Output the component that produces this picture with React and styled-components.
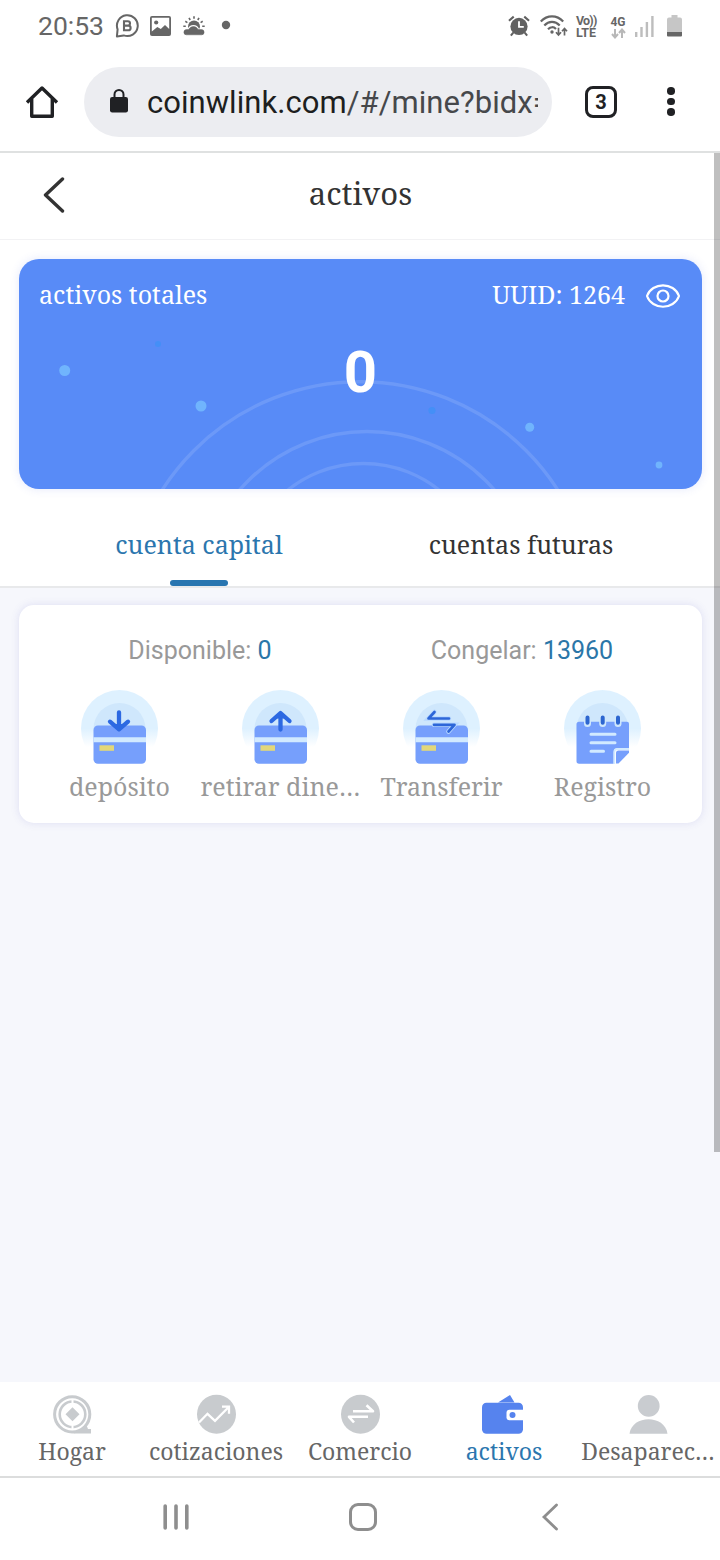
import React from "react";
import styled, { createGlobalStyle } from "styled-components";

const serif = '"Noto Serif", "Droid Serif", "DejaVu Serif Condensed", "DejaVu Serif", serif';
const sans = 'Roboto, "Liberation Sans", sans-serif';

const GlobalStyle = createGlobalStyle`
  * { box-sizing: border-box; }
  body { margin: 0; background: #fff; font-family: ${serif}; }
  svg { display: block; flex: none; }
`;

const Screen = styled.div`
  width: 720px;
  height: 1560px;
  display: flex;
  flex-direction: column;
  background: #fff;
  overflow: hidden;
`;

const StatusBar = styled.div`
  height: 52px;
  padding: 0 38px;
  display: flex;
  justify-content: space-between;
  align-items: center;
  font-family: ${sans};
  color: #666;
`;
const StatusGroup = styled.div`
  display: flex;
  align-items: center;
`;
const Clock = styled.span`
  font-size: 26.5px;
  line-height: 52px;
  width: 77px;
`;
const Gap = styled.span`
  flex: none;
  width: ${(p) => p.$w}px;
`;
const VoLte = styled.div`
  width: 21px;
  padding-top: 1px;
  font: 700 12.5px/12px ${sans};
  white-space: nowrap;
  div:first-child { letter-spacing: -0.8px; }
`;
const Network = styled.div`
  display: flex;
  flex-direction: column;
  align-items: center;
  margin-left: 13px;
  padding-top: 2px;
  width: 16px;
  font: 700 12px/12px ${sans};
`;

const BrowserBar = styled.div`
  height: 101px;
  border-bottom: 2px solid #dfe1e1;
  padding: 0 36px 0 25px;
  display: flex;
  align-items: center;
`;
const Address = styled.div`
  width: 468px;
  height: 70px;
  margin-left: 25px;
  border-radius: 35px;
  background: #ecedf1;
  display: flex;
  align-items: center;
  padding: 1px 14px 0 25px;
`;
const Url = styled.div`
  margin-left: 18px;
  padding-top: 2px;
  width: 391px;
  overflow: hidden;
  white-space: nowrap;
  font: 400 31px/44px ${sans};
  letter-spacing: 0.05px;
  color: #46484b;
  b { font-weight: 400; color: #1d1e20; }
`;
const TabCount = styled.div`
  width: 32px;
  height: 32px;
  margin-left: 33px;
  border: 3px solid #202124;
  border-radius: 8px;
  font: 700 20px/26px ${sans};
  text-align: center;
  color: #202124;
`;
const Kebab = styled.div`
  margin-left: auto;
  width: 26px;
  display: flex;
  flex-direction: column;
  align-items: center;
  gap: 3px;
  i { width: 7.5px; height: 7.5px; border-radius: 50%; background: #202124; }
`;

const Page = styled.main`
  position: relative;
  height: 1229px;
  background: #f6f7fc;
`;
const ScrollThumb = styled.div`
  position: absolute;
  top: 0;
  right: 0;
  width: 6px;
  height: 999px;
  background: rgba(0, 0, 0, 0.25);
`;
const TitleBar = styled.header`
  height: 87px;
  background: #fff;
  border-bottom: 1px solid #f2f2f4;
  display: grid;
  grid-template-columns: 100px 1fr 100px;
  align-items: center;
  padding-bottom: 3px;
`;
const Back = styled.div`
  padding-left: 42px;
`;
const Title = styled.h1`
  margin: 0;
  padding: 0 0 3px 1px;
  text-align: center;
  font: 400 31px/44px ${serif};
  color: #333;
`;

const Overview = styled.section`
  height: 348px;
  background: #fff;
  padding: 19px 18px 0 19px;
  border-bottom: 2px solid #e8e9eb;
`;
const BalanceCard = styled.div`
  position: relative;
  height: 230px;
  border-radius: 20px;
  background: #588bf7;
  box-shadow: 0 0 10px rgba(88, 110, 230, 0.16);
  overflow: hidden;
  color: #fff;
`;
const CardArt = styled.svg`
  position: absolute;
  inset: 0;
`;
const CardTop = styled.div`
  position: relative;
  display: flex;
  align-items: center;
  padding: 17px 21px 0 20px;
  font: 400 25px/36px ${serif};
  svg { margin-left: 20px; margin-top: 4px; }
`;
const Uuid = styled.span`
  margin-left: auto;
`;
const Total = styled.div`
  position: relative;
  text-align: center;
  font: 700 58px/68px ${sans};
  margin-top: 26px;
`;

const Tabs = styled.div`
  display: flex;
  height: 97px;
  padding: 0 20px 0 19px;
`;
const Tab = styled.div`
  flex: 1;
  display: flex;
  flex-direction: column;
  align-items: center;
  justify-content: flex-end;
  color: ${(p) => (p.$active ? "#2b76ae" : "#333")};
  font: 400 25px/36px ${serif};
  &::after {
    content: "";
    width: 58px;
    height: 6px;
    margin-top: 18px;
    border-radius: 3px;
    background: ${(p) => (p.$active ? "#2875b0" : "transparent")};
  }
`;

const Panel = styled.section`
  margin: 17px 18px 0 19px;
  height: 218px;
  padding: 28px 19px 0 20px;
  border-radius: 15px;
  background: #fff;
  box-shadow: 0 0 8px rgba(80, 80, 190, 0.15);
`;
const Stats = styled.div`
  display: flex;
`;
const Stat = styled.div`
  flex: 1;
  text-align: center;
  font: 400 25px/36px ${sans};
  color: #999;
  b { font-weight: 400; color: #2b76a8; }
`;
const Actions = styled.div`
  display: flex;
  margin-top: 21px;
`;
const Action = styled.div`
  width: 161px;
  display: flex;
  flex-direction: column;
  align-items: center;
`;
const ActionLabel = styled.div`
  margin-top: 3px;
  font: 400 25px/36px ${serif};
  color: #999;
  white-space: nowrap;
`;

const BottomNav = styled.nav`
  height: 96px;
  border-bottom: 2px solid #dcdddd;
  display: flex;
  background: #fff;
`;
const NavItem = styled.div`
  width: 144px;
  padding-top: 12px;
  display: flex;
  flex-direction: column;
  align-items: center;
  color: ${(p) => (p.$active ? "#2b76ae" : "#666")};
  svg { margin-right: ${(p) => (p.$active ? 4 : 0)}px; }
`;
const NavLabel = styled.div`
  font: 400 23px/32px ${serif};
  white-space: nowrap;
  height: 31px;
  overflow: hidden;
  margin-top: 1px;
`;
const SystemNav = styled.div`
  height: 82px;
  display: grid;
  grid-template-columns: 351px 23px 351px;
  align-items: center;
  padding-bottom: 4px;
  justify-items: center;
`;

const ChatIcon = () => (
  <svg width="24" height="24" viewBox="0 0 24 24" fill="none" stroke="#666" strokeWidth="2">
    <path d="M2.600 15.300A10.400 10.400 0 1 1 8.700 21.400L1.900 22.400Z" strokeLinejoin="round" />
    <path d="M9 7.200h3.800a2.200 2.200 0 0 1 0 4.400H9zM9 11.600h4.300a2.300 2.300 0 0 1 0 4.600H9z" strokeWidth="2.100" />
  </svg>
);
const PhotoIcon = () => (
  <svg width="21" height="20" viewBox="0 0 21 20">
    <rect width="21" height="20" rx="2" fill="#666" />
    <path d="M1.800 1.800h17.400v11.200l-4.200-4-4.200 4-3.500-2L1.800 15.500z" fill="#fff" />
    <circle cx="6.200" cy="6.500" r="2.100" fill="#666" />
  </svg>
);
const WeatherIcon = () => (
  <svg width="22" height="20" viewBox="0 0 22 20" fill="#666">
    <circle cx="11" cy="10.500" r="6" />
    <path d="M11 .3v2.500M6 1.800l1.200 2.200M16 1.800l-1.200 2.200M2.300 5.300l2.100 1.300M19.700 5.300l-2.100 1.300M.3 10.300h2.500M19.200 10.300h2.500" stroke="#666" strokeWidth="1.600" />
    <path d="M3.500 18.800a2.600 2.600 0 0 1 0-5.200h2.200C7.500 9 13.500 9 15 13.600h3.500a2.600 2.600 0 0 1 0 5.200z" stroke="#fff" strokeWidth="2.200" />
    <path d="M3.500 18.800a2.600 2.600 0 0 1 0-5.200h2.200C7.500 9.500 13.500 9.500 15 13.600h3.500a2.600 2.600 0 0 1 0 5.200z" stroke="#666" strokeWidth=".5" />
  </svg>
);
const AlarmIcon = () => (
  <svg width="22" height="22" viewBox="0 0 23 22" fill="none" stroke="#616161" strokeWidth="2.200">
    <circle cx="11.500" cy="11.500" r="9" fill="#616161" stroke="none" />
    <path d="M1 5.500L6 1.200M22 5.500L17 1.200M5.500 18l-2.500 3M17.500 18l2.500 3" />
    <path d="M11.500 6v6h5" stroke="#fff" strokeWidth="1.900" />
  </svg>
);
const WifiIcon = () => (
  <svg width="28" height="22" viewBox="0 0 28 22" fill="none" stroke="#666" strokeWidth="2.200">
    <path d="M.8 6.500C7.300-.3 16.700-.3 23.200 6.500M4.300 10.500c4.500-4.800 10.900-4.800 15.400 0M8 14.200c2.600-2.600 5.700-2.600 8-.2" />
    <circle cx="12" cy="17" r="1.700" fill="#666" stroke="none" />
    <path d="M18.500 12.800v7.200M16 17.200l2.500 2.800 2.500-2.800M24.500 20.500V13.500M22 16.300l2.500-2.800 2.500 2.800" strokeWidth="1.700" />
  </svg>
);
const DataArrows = () => (
  <svg width="15" height="11" viewBox="0 0 15 11" fill="none" stroke="#b8b8b8" strokeWidth="2">
    <path d="M4 1v8M1 6l3 3.500L7 6M11 10V2M8 5l3-3.500L14 5" />
  </svg>
);
const SignalIcon = () => (
  <svg width="19" height="21" viewBox="0 0 19 21" fill="#bdbdbd">
    <path d="M0 16h2.400v5H0zM5.300 11h2.400v10H5.300zM10.700 6h2.400v15h-2.400zM16.200 0h2.400v21h-2.400z" />
  </svg>
);
const BatteryIcon = () => (
  <svg width="15" height="22" viewBox="0 0 15 22">
    <path d="M4.500 0h6v2.500H13q2 0 2 2V17H0V4.500q0-2 2-2h2.500z" fill="#c6c6c6" />
    <path d="M0 17h15v3.500q0 1-1 1H1q-1 0-1-1z" fill="#666" />
  </svg>
);
const HomeIcon = () => (
  <svg width="34" height="34" viewBox="0 0 34 34" fill="none" stroke="#202124" strokeWidth="3.400">
    <path d="M2 17.500L17 3l15 14.500M6.700 14v17.200h20.600V14" strokeLinejoin="round" />
  </svg>
);
const LockIcon = () => (
  <svg width="20" height="26" viewBox="0 0 20 26">
    <rect x="1" y="8" width="18" height="15.500" rx="2.200" fill="#202124" />
    <path d="M5.500 9V5.500a4.500 4.500 0 0 1 9 0V9" fill="none" stroke="#202124" strokeWidth="2" />
  </svg>
);
const EyeIcon = () => (
  <svg width="36" height="26" viewBox="0 0 36 26" fill="none" stroke="#fff" strokeWidth="2.200">
    <path d="M2 13C7-1.300 29-1.300 34 13 29 27.300 7 27.300 2 13z" strokeLinejoin="round" />
    <circle cx="18" cy="13" r="5.500" />
  </svg>
);

const Halo = ({ id, children }) => (
  <svg width="77" height="75" viewBox="0 0 77 75">
    <defs>
      <linearGradient id={id} x1="0" y1="0" x2="0" y2="1">
        <stop offset="0.500" stopColor="#def1ff" />
        <stop offset="0.740" stopColor="#fff" />
      </linearGradient>
    </defs>
    <circle cx="38.500" cy="38.500" r="38.500" fill={`url(#${id})`} />
    <circle cx="38.500" cy="39" r="26" fill="#cfe7fc" />
    {children}
  </svg>
);
const BankCard = () => (
  <>
    <rect x="12.500" y="35.500" width="52.500" height="38.200" rx="4.500" fill="#769ffc" />
    <path d="M12.500 47.300H65v5H12.500z" fill="#d2eaff" />
    <path d="M18.500 55.300h14.500v5.500H18.500z" fill="#e2d77a" />
  </>
);
const DepositIcon = () => (
  <Halo id="halo-deposit">
    <BankCard />
    <path d="M38 22.300v15.500M29 31.700l9 7.600 9-7.600" fill="none" stroke="#2d69e2" strokeWidth="4.300" strokeLinecap="round" strokeLinejoin="round" />
    <path d="M34 34h8l-4 5z" fill="#2d69e2" />
  </Halo>
);
const WithdrawIcon = () => (
  <Halo id="halo-withdraw">
    <BankCard />
    <path d="M38.500 39.500V24M29.500 31l9-8 9 8" fill="none" stroke="#2d69e2" strokeWidth="4.300" strokeLinecap="round" strokeLinejoin="round" />
    <path d="M34.500 28.500h8l-4-5z" fill="#2d69e2" />
  </Halo>
);
const TransferIcon = () => (
  <Halo id="halo-transfer">
    <BankCard />
    <path d="M46 28.500H25.500l6-6.500M31 34.800h20.500l-6 6.700" fill="none" stroke="#b9d9ff" strokeWidth="4.500" strokeLinecap="round" />
    <path d="M46 28.500H25.500l6-6.500M31 34.800h20.500l-6 6.700" fill="none" stroke="#2d66d8" strokeWidth="2.700" strokeLinecap="round" strokeLinejoin="round" />
  </Halo>
);
const RecordIcon = () => (
  <Halo id="halo-record">
    <path d="M15 31.700h48q2 0 2 2V58.500L50 73.700H15q-2.500 0-2.500-2.500v-37q0-2.500 2.500-2.500z" fill="#769ffc" />
    <path d="M49.800 75V62q0-3.500 3.500-3.500H66V75z" fill="#fff" />
    <path d="M50.300 74V62q0-3 3-3H65" fill="none" stroke="#d2eaff" strokeWidth="1.800" />
    <path d="M52 73.500V63q0-2.500 2.500-2.500H65v2.300L54.500 73.500z" fill="#769ffc" />
    <path d="M23.500 27v6.500M38.700 27v6.500M54 27v6.500" stroke="#cfe7fc" strokeWidth="7" strokeLinecap="round" />
    <path d="M23.500 27.500v5.200M38.700 27.500v5.200M54 27.500v5.200" stroke="#2d66d0" strokeWidth="4" strokeLinecap="round" />
    <path d="M27 44.300h24M27 52.800h24M27 61.200h12.500" stroke="#d2eaff" strokeWidth="3" strokeLinecap="round" />
  </Halo>
);

const ChipIcon = () => (
  <svg width="39" height="40" viewBox="0 0 39 40" fill="none">
    <circle cx="19.200" cy="20.300" r="17.600" stroke="#c8cbce" strokeWidth="3" />
    <path d="M26 36.500L33 30l2 5h3v4.500H20z" fill="#c8cbce" />
    <circle cx="19.500" cy="20.300" r="12.800" stroke="#c8cbce" strokeWidth="2.600" />
    <path d="M19.500 5v4.500M19.500 31V35" stroke="#fff" strokeWidth="2" />
    <path d="M19.500 13.300l7 7-7 7-7-7z" fill="#c8cbce" />
  </svg>
);
const QuotesIcon = () => (
  <svg width="39" height="40" viewBox="0 0 39 40" fill="none" stroke="#fff" strokeWidth="2.300">
    <circle cx="19.500" cy="20.300" r="19.500" fill="#c8cbce" stroke="none" />
    <path d="M2 28.500l8.500-8.700 7.500 7L31.500 13.200M25 12.700h7v7" />
  </svg>
);
const TradeIcon = () => (
  <svg width="39" height="40" viewBox="0 0 39 40" fill="none" stroke="#fff" strokeWidth="2.600">
    <circle cx="19.500" cy="20.300" r="19.500" fill="#c8cbce" stroke="none" />
    <path d="M12 17.300h20l-6.500-6M27 22.800H8l5 5.700" strokeLinejoin="round" />
  </svg>
);
const WalletIcon = () => (
  <svg width="41" height="40" viewBox="0 0 41 40">
    <path d="M16 8.500L28 1l4.500 7.500z" fill="#5683ee" />
    <rect y="8.800" width="41" height="31" rx="4.500" fill="#5683ee" />
    <path d="M41 15.800H27.500q-3 0-3 3v4.500q0 3 3 3H41z" fill="#fff" />
    <circle cx="30.500" cy="21" r="3" fill="#5683ee" />
  </svg>
);
const PersonIcon = () => (
  <svg width="39" height="40" viewBox="0 0 39 40" fill="#c9ccd0">
    <circle cx="19.700" cy="11.900" r="10.900" />
    <path d="M.5 39.800C3 20.500 36 20.500 38.500 39.800z" />
  </svg>
);

const actions = [
  { label: "depósito", Icon: DepositIcon },
  { label: "retirar dine…", Icon: WithdrawIcon },
  { label: "Transferir", Icon: TransferIcon },
  { label: "Registro", Icon: RecordIcon },
];
const navItems = [
  { label: "Hogar", Icon: ChipIcon },
  { label: "cotizaciones", Icon: QuotesIcon },
  { label: "Comercio", Icon: TradeIcon },
  { label: "activos", Icon: WalletIcon, active: true },
  { label: "Desaparec…", Icon: PersonIcon },
];

export default function App() {
  return (
    <Screen>
      <GlobalStyle />
      <StatusBar>
        <StatusGroup>
          <Clock>20:53</Clock>
          <ChatIcon />
          <Gap $w={11} />
          <PhotoIcon />
          <Gap $w={12} />
          <WeatherIcon />
          <Gap $w={16} />
          <svg width="10" height="12">
            <circle cx="5" cy="5" r="4.200" fill="#666" />
          </svg>
        </StatusGroup>
        <StatusGroup>
          <AlarmIcon />
          <Gap $w={10} />
          <WifiIcon />
          <Gap $w={8} />
          <VoLte>
            <div>Vo))</div>
            <div>LTE</div>
          </VoLte>
          <Network>
            <span>4G</span>
            <DataArrows />
          </Network>
          <Gap $w={9} />
          <SignalIcon />
          <Gap $w={13} />
          <BatteryIcon />
        </StatusGroup>
      </StatusBar>
      <BrowserBar>
        <HomeIcon />
        <Address>
          <LockIcon />
          <Url>
            <b>coinwlink.com</b>/#/mine?bidx=
          </Url>
        </Address>
        <TabCount>3</TabCount>
        <Kebab>
          <i />
          <i />
          <i />
        </Kebab>
      </BrowserBar>
      <Page>
        <TitleBar>
          <Back>
            <svg width="24" height="36" viewBox="0 0 24 36" fill="none" stroke="#333" strokeWidth="3.400">
              <path d="M20.500 2L3.500 18l17 16" strokeLinecap="round" strokeLinejoin="round" />
            </svg>
          </Back>
          <Title>activos</Title>
        </TitleBar>
        <Overview>
          <BalanceCard>
            <CardArt width="683" height="230" viewBox="19 259 683 230" fill="none">
              <g stroke="#fff" strokeOpacity="0.120" strokeWidth="3.400">
                <circle cx="360" cy="616.500" r="234.800" />
                <circle cx="367" cy="599.500" r="168" />
                <circle cx="363.500" cy="584.500" r="121" />
              </g>
              <g fill="#70b4fd">
                <circle cx="64.700" cy="370.500" r="5.500" />
                <circle cx="201" cy="406" r="5.500" />
                <circle cx="529.700" cy="427.300" r="4.500" />
                <circle cx="659" cy="465" r="3.400" />
              </g>
              <g fill="#448ff7">
                <circle cx="158" cy="344" r="3" />
                <circle cx="432" cy="410.500" r="3.600" />
              </g>
            </CardArt>
            <CardTop>
              <span>activos totales</span>
              <Uuid>UUID: 1264</Uuid>
              <EyeIcon />
            </CardTop>
            <Total>0</Total>
          </BalanceCard>
          <Tabs>
            <Tab $active>cuenta capital</Tab>
            <Tab>cuentas futuras</Tab>
          </Tabs>
        </Overview>
        <Panel>
          <Stats>
            <Stat>
              Disponible: <b>0</b>
            </Stat>
            <Stat>
              Congelar: <b>13960</b>
            </Stat>
          </Stats>
          <Actions>
            {actions.map(({ label, Icon }) => (
              <Action key={label}>
                <Icon />
                <ActionLabel>{label}</ActionLabel>
              </Action>
            ))}
          </Actions>
        </Panel>
        <ScrollThumb />
      </Page>
      <BottomNav>
        {navItems.map(({ label, Icon, active }) => (
          <NavItem key={label} $active={active}>
            <Icon />
            <NavLabel>{label}</NavLabel>
          </NavItem>
        ))}
      </BottomNav>
      <SystemNav>
        <svg width="26" height="28" viewBox="0 0 26 28" stroke="#8e8e8e" strokeWidth="3.600" strokeLinecap="round">
          <path d="M2.200 3v22M13 3v22M23.800 3v22" />
        </svg>
        <svg width="28" height="28" viewBox="0 0 28 28" fill="none" stroke="#8e8e8e" strokeWidth="3">
          <rect x="1.500" y="1.500" width="25" height="25" rx="7.500" />
        </svg>
        <svg width="18" height="28" viewBox="0 0 18 28" fill="none" stroke="#8e8e8e" strokeWidth="2.800">
          <path d="M15.500 2L3 14l12.500 12" strokeLinecap="round" />
        </svg>
      </SystemNav>
    </Screen>
  );
}
